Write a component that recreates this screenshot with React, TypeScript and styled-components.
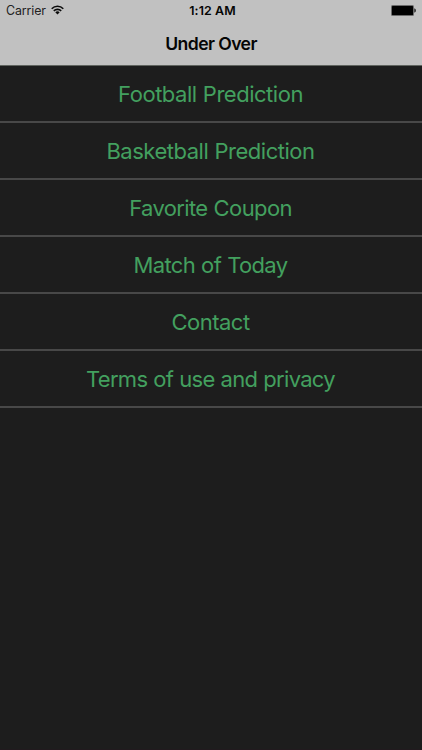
import React from "react";
import styled, { createGlobalStyle } from "styled-components";

const GlobalStyle = createGlobalStyle`
  *, *::before, *::after { box-sizing: border-box; }
  html, body { margin: 0; padding: 0; background: #1d1d1d; }
  body { overflow: hidden; }
`;

const Screen = styled.main`
  display: flex;
  flex-direction: column;
  width: 100%;
  height: 100vh;
  background: #1d1d1d;
  border-bottom: 1px solid #211a1e;
  font-family: Inter, "Liberation Sans", sans-serif;
`;

const Header = styled.header`
  flex: none;
  height: 66px;
  background: #c1c1c1;
  border-bottom: 1px solid #60645f;
  color: #050505;
`;

const StatusBar = styled.div`
  display: grid;
  grid-template-columns: 1fr auto 1fr;
  align-items: start;
  height: 22px;
  padding: 0 6px;
  font-size: 12.4px;
  line-height: 22px;
`;

const Carrier = styled.div`
  display: flex;
  align-items: flex-start;
  gap: 5px;
  letter-spacing: -0.1px;
  color: #222;

  svg { margin-top: 5px; }
`;

const Clock = styled.time`
  font-weight: 600;
  letter-spacing: 0.1px;
  padding-left: 3px;
`;

const BatterySlot = styled.div`
  display: flex;
  justify-content: flex-end;
  padding-top: 5px;
`;

const NavBar = styled.h1`
  margin: 0;
  height: 43px;
  font-size: 17.6px;
  font-weight: 600;
  line-height: 43px;
  letter-spacing: -0.58px;
  text-align: center;
`;

const Menu = styled.nav`
  display: flex;
  flex-direction: column;
`;

const MenuItem = styled.a<{ $tracking: number }>`
  height: 57px;
  padding-right: 1px;
  border-bottom: 2px solid #484848;
  color: #43a05f;
  font-size: 22px;
  line-height: 57px;
  text-align: center;
  white-space: nowrap;
  letter-spacing: ${(p) => p.$tracking}px;
  word-spacing: 0.5px;
  text-decoration: none;
`;

const WifiIcon = () => (
  <svg width="13" height="10" viewBox="0 0 13 10" fill="none" stroke="#0a0a0a" strokeWidth="1.6">
    <path d="M0.7 3.7a8.2 8.2 0 0 1 11.6 0" />
    <path d="M2.8 5.9a5.2 5.2 0 0 1 7.4 0" />
    <path d="M6.5 9.6 4.3 7.3a3.1 3.1 0 0 1 4.4 0z" fill="#0a0a0a" stroke="none" />
  </svg>
);

const BatteryIcon = () => (
  <svg width="25" height="11" viewBox="0 0 25 11">
    <rect x="0" y="0" width="23" height="11" rx="1.5" fill="#6b6b6b" />
    <rect x="1" y="1" width="21" height="9" rx="0.5" fill="#000" />
    <path d="M23.2 3.5h0.6q1.2 0.6 1.2 2t-1.2 2h-0.6z" fill="#333" />
  </svg>
);

const items = [
  { label: "Football Prediction", tracking: -0.48 },
  { label: "Basketball Prediction", tracking: -0.48 },
  { label: "Favorite Coupon", tracking: -0.62 },
  { label: "Match of Today", tracking: -0.66 },
  { label: "Contact", tracking: -0.5 },
  { label: "Terms of use and privacy", tracking: -0.7 },
];

export default function App() {
  return (
    <Screen>
      <GlobalStyle />
      <Header>
        <StatusBar>
          <Carrier>
            Carrier
            <WifiIcon />
          </Carrier>
          <Clock>1:12 AM</Clock>
          <BatterySlot>
            <BatteryIcon />
          </BatterySlot>
        </StatusBar>
        <NavBar>Under Over</NavBar>
      </Header>
      <Menu>
        {items.map((item) => (
          <MenuItem key={item.label} $tracking={item.tracking}>
            {item.label}
          </MenuItem>
        ))}
      </Menu>
    </Screen>
  );
}
